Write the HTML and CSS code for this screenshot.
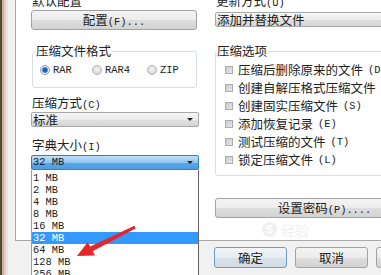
FILE: index.html
```html
<!DOCTYPE html>
<html lang="zh-CN">
<head>
<meta charset="utf-8">
<title>压缩文件名和参数</title>
<link rel="stylesheet" href="styles.css">
</head>
<body>
<div class="window">
  <div class="frame"></div>
  <div class="dialog">
    <div class="tabpage">
      <div class="col col-left">
        <div class="label">默认配置</div>
        <div class="btn btn-config">配置<span class="en">(F)...</span></div>
        <fieldset class="group group-format">
          <legend>压缩文件格式</legend>
          <div class="radios">
            <span class="opt"><i class="radio on"></i><span class="en">RAR</span></span>
            <span class="opt"><i class="radio"></i><span class="en">RAR4</span></span>
            <span class="opt"><i class="radio"></i><span class="en">ZIP</span></span>
          </div>
        </fieldset>
        <div class="label label-method">压缩方式<span class="en">(C)</span></div>
        <div class="combo combo-method"><span>标准</span><i class="caret"></i></div>
        <div class="label label-dict">字典大小<span class="en">(I)</span></div>
        <div class="dropdown">
          <div class="combo combo-active"><span class="en">32 MB</span><i class="caret"></i></div>
          <ul class="list">
            <li>1 MB</li>
            <li>2 MB</li>
            <li>4 MB</li>
            <li>8 MB</li>
            <li>16 MB</li>
            <li class="selected">32 MB</li>
            <li>64 MB</li>
            <li>128 MB</li>
            <li>256 MB</li>
            <li>512 MB</li>
          </ul>
        </div>
      </div>
      <div class="col col-right">
        <div class="label">更新方式<span class="en">(U)</span></div>
        <div class="combo combo-update"><span>添加并替换文件</span><i class="caret"></i></div>
        <fieldset class="group group-options">
          <legend>压缩选项</legend>
          <ul class="checks">
            <li><i class="check"></i>压缩后删除原来的文件<span class="en">(D)</span></li>
            <li><i class="check"></i>创建自解压格式压缩文件<span class="en">(X)</span></li>
            <li><i class="check"></i>创建固实压缩文件<span class="en">(S)</span></li>
            <li><i class="check"></i>添加恢复记录<span class="en">(E)</span></li>
            <li><i class="check"></i>测试压缩的文件<span class="en">(T)</span></li>
            <li><i class="check"></i>锁定压缩文件<span class="en">(L)</span></li>
          </ul>
        </fieldset>
        <div class="btn btn-password">设置密码<span class="en">(P)....</span></div>
      </div>
    </div>
    <div class="footer">
      <div class="btn btn-foot btn-default">确定</div>
      <div class="btn btn-foot">取消</div>
      <div class="btn btn-foot">帮助</div>
    </div>
  </div>
</div>
<div class="watermark"><span class="wm-logo">S</span><span class="wm-text">经验</span></div>
<svg class="pointer" width="381" height="275" viewBox="0 0 381 275">
  <polygon points="77,256 87.6,242.2 90.2,246.6 134.4,225.8 135.6,228.4 92.6,251.2 95,255.6" fill="#e5262b"/>
</svg>
</body>
</html>
```

FILE: styles.css
```css
* { box-sizing: border-box; }

html, body {
  margin: 0;
  padding: 0;
  width: 381px;
  height: 275px;
  overflow: hidden;
}

body {
  position: relative;
  font-family: "Noto Sans CJK SC", sans-serif;
  font-size: 12.5px;
  line-height: 14px;
  color: #222;
  background: #f0f0f0;
}

.en {
  font-family: "Liberation Mono", monospace;
  font-size: 10.4px;
}

.window {
  display: flex;
  height: 275px;
}

.frame {
  flex: 0 0 8px;
  background: linear-gradient(to right, #4f4a36 0 2px, #cfae98 2px 4px, #e2cfc4 4px 6px, #ece0da 6px 8px);
}

.dialog {
  flex: 1;
  min-width: 0;
  display: flex;
  flex-direction: column;
  background: #f1f1f1;
}

.tabpage {
  margin-left: 7px;
  background: #fff;
  border-left: 1px solid #a9a9a9;
  border-bottom: 1px solid #a9a9a9;
  display: grid;
  grid-template-columns: 168px 219px;
  column-gap: 16px;
  align-items: start;
  padding: 0 0 22px 15px;
}

.col {
  margin-top: -6px;
  display: flex;
  flex-direction: column;
}

.label {
  padding-left: 1px;
  height: 14px;
  white-space: nowrap;
}

/* buttons */
.btn {
  height: 20px;
  border: 1px solid #a2a2a2;
  border-radius: 3px;
  background: linear-gradient(#f4f4f4, #ececec 50%, #dedede 51%, #d3d3d3);
  text-align: center;
  line-height: 18px;
  white-space: nowrap;
}

.btn-config {
  margin-top: 2px;
  margin-right: 2px;
}

.btn-password {
  margin-top: 22px;
}

/* group boxes */
.group {
  margin: 0;
  padding: 0;
  border: 1px solid #d5dfe5;
  border-radius: 3px;
  min-width: 0;
}

.group legend {
  padding: 0 1px;
  line-height: 14px;
}

.group-format {
  margin: 14px 2px 0 1px;
  padding-bottom: 10px;
}

.group-format legend {
  margin-left: 2px;
}

.radios {
  margin-top: 5px;
  padding-left: 7px;
  display: grid;
  grid-template-columns: 52px 55px auto;
  height: 14px;
}

.opt {
  display: flex;
  align-items: center;
  gap: 3px;
}

.radio {
  width: 10px;
  height: 10px;
  border-radius: 50%;
  border: 1px solid #b4b4b4;
  background: radial-gradient(circle at 50% 40%, #f4f4f4, #cfcfcf);
}

.radio.on {
  border-color: #8a9fb8;
  background: radial-gradient(circle, #1e5fc4 0 2px, #4a86d8 2.5px, #e8eef6 3.5px);
}

/* combos */
.combo {
  height: 15px;
  border: 1px solid #a8a8a8;
  border-radius: 2px;
  background: linear-gradient(#f6f6f6, #ececec 50%, #dfdfdf 51%, #d6d6d6);
  display: flex;
  align-items: center;
  justify-content: space-between;
  padding: 0 5px 0 1px;
  line-height: 13px;
  white-space: nowrap;
  overflow: hidden;
}

.caret {
  flex: none;
  width: 0;
  height: 0;
  border-left: 3px solid transparent;
  border-right: 3px solid transparent;
  border-top: 3px solid #222;
}

.combo-method {
  margin-top: 2px;
}

.label-method {
  margin-top: 8px;
}

.label-dict {
  margin-top: 11px;
}

.dropdown {
  position: relative;
  margin-top: 3px;
}

.combo-active {
  border-color: #3c7fb1;
  background: linear-gradient(#c2e0f8, #8fc4ee 50%, #5ba7e8 51%, #4c9ce4);
  color: #0f1c2c;
}

.list {
  position: absolute;
  top: 100%;
  left: 0;
  right: 0;
  z-index: 2;
  margin: 0;
  padding: 2px 0 0;
  list-style: none;
  background: #fff;
  border-left: 1px solid #9c9c9c;
  border-right: 1px solid #646464;
  font-family: "Liberation Mono", monospace;
  font-size: 10.4px;
  line-height: 12px;
}

.list li {
  height: 12px;
  padding-left: 1px;
  white-space: nowrap;
}

.list li.selected {
  background: #3399ff;
  color: #fff;
}

.combo-update {
  margin-top: 4px;
}

.group-options {
  margin-top: 17px;
  padding-bottom: 6px;
}

.checks {
  list-style: none;
  margin: 3px 0 0;
  padding: 0 0 0 9px;
}

.checks li {
  height: 18px;
  display: flex;
  align-items: center;
  gap: 5px;
  white-space: nowrap;
}

.check {
  flex: none;
  width: 8px;
  height: 8px;
  border: 1px solid #acacac;
  background: linear-gradient(135deg, #cbcbcb, #e6e6e6);
}

/* footer */
.footer {
  display: flex;
  gap: 8px;
  padding: 6px 0 0 206px;
}

.btn-foot {
  flex: none;
  width: 73px;
  height: 21px;
  line-height: 19px;
}

.btn-default {
  border-color: #6d9cc8;
  background: linear-gradient(#f2f6fa, #e6ecf1 50%, #d9e1e8 51%, #d2dbe3);
}

/* overlays */
.watermark {
  position: absolute;
  left: 262px;
  top: 222px;
  display: flex;
  align-items: center;
  gap: 4px;
  color: #efefef;
  font-size: 14px;
  pointer-events: none;
}

.wm-logo {
  width: 15px;
  height: 15px;
  border-radius: 50%;
  background: #f0f0f0;
  color: #fff;
  font-family: "Liberation Sans", sans-serif;
  font-weight: bold;
  font-size: 11px;
  line-height: 15px;
  text-align: center;
}

.pointer {
  position: absolute;
  left: 0;
  top: 0;
  z-index: 5;
  pointer-events: none;
}
```
